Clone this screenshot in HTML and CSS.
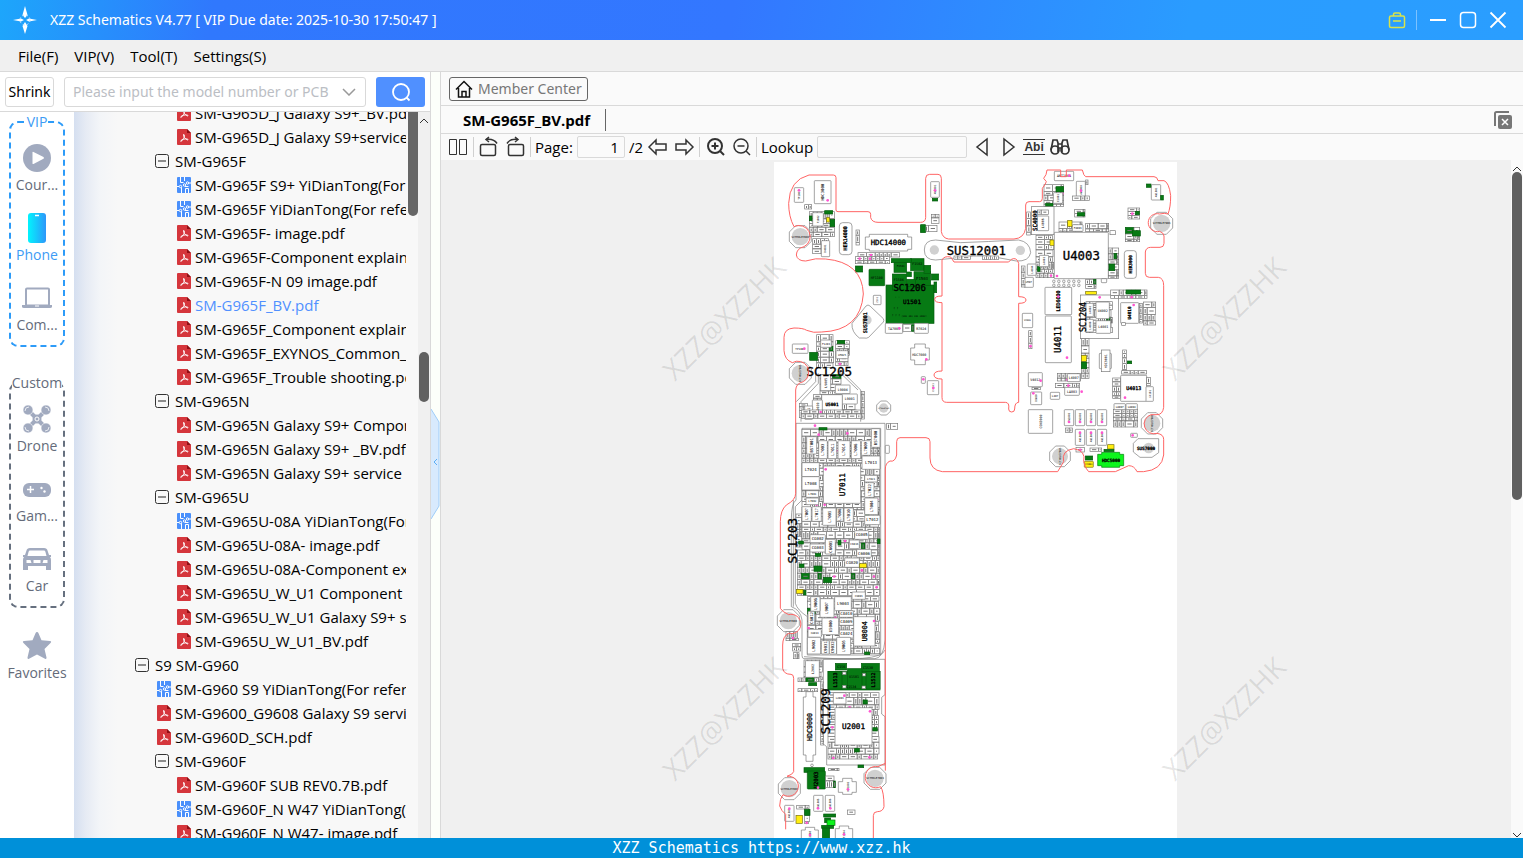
FILE: index.html
```
<!DOCTYPE html>
<html lang="en">
<head>
<meta charset="utf-8">
<title>XZZ Schematics</title>
<link rel="stylesheet" href="styles.css">
</head>
<body>

<svg class="defs" width="0" height="0">
	<symbol id="pdf" viewBox="0 0 14 16">
		<path d="M1 0h9l4 4v11q0 1-1 1H1q-1 0-1-1V1q0-1 1-1z" fill="#d5363c"/>
		<path d="M10 0l4 4h-4z" fill="#8e1015"/>
		<path d="M6.500 5.500c2 0 .5 3.500-1 5.500s-2.500 1.500-1.500.5 4-2 6-1.500 1 1.500-.5.500-3-3-3-5z" fill="none" stroke="#fff" stroke-width="1"/>
	</symbol>
	<symbol id="pcb" viewBox="0 0 14 16">
		<rect width="14" height="16" rx="1" fill="#4a90fb"/>
		<path d="M3.500 0v5.500h3M7.500 0v4M10.500 6h3.500M0 9.500h2M4.500 10v6M8.500 16v-4.500h3V16M11.500 9.500H8" fill="none" stroke="#fff" stroke-width="1"/>
		<circle cx="3.500" cy="9.500" r="1.200" fill="#4a90fb" stroke="#fff"/>
		<circle cx="7.500" cy="8" r="1.200" fill="#4a90fb" stroke="#fff"/>
		<circle cx="10.500" cy="6" r="1.200" fill="#4a90fb" stroke="#fff"/>
	</symbol>
	<symbol id="minus" viewBox="0 0 14 14">
		<rect x=".5" y=".5" width="13" height="13" rx="2" fill="#f8f8f8" stroke="#333"/>
		<path d="M3 7h8" stroke="#222"/>
	</symbol>
	<symbol id="up" viewBox="0 0 10 6">
		<path d="M1 5l4-4 4 4" fill="none" stroke="#333"/>
	</symbol>
</svg>

<header class="titlebar">
	<svg class="logo" viewBox="0 0 30 30" width="30" height="30">
		<path d="M15 1l2.500 9L15 13l-2.500-3zM15 29l2.500-8L15 17l-2.500 4zM3 15l8-1.500 3 1.500-3 1.500zM27 15l-8-1.500-3 1.500 3 1.500z" fill="#fff"/>
		<circle cx="15" cy="15" r="5" fill="none" stroke="#bfe2ff" stroke-dasharray="2 2"/>
	</svg>
	<h1>XZZ Schematics V4.77 [ VIP Due date: 2025-10-30 17:50:47 ]</h1>
	<button type="button" class="winbtn" aria-label="Toolbox">
		<svg viewBox="0 0 18 18" width="18" height="18" fill="none" stroke="#d9e34a" stroke-width="1.500"><rect x="1.500" y="5" width="15" height="11.500" rx="1.500"/><path d="M5.500 5V3.500q0-1.500 1.500-1.500h4q1.500 0 1.500 1.500V5M5 10h8"/></svg>
	</button>
	<span class="winsep"></span>
	<button type="button" class="winbtn" aria-label="Minimize">
		<svg viewBox="0 0 18 18" width="18" height="18" stroke="#fff" stroke-width="2"><path d="M1 9h16"/></svg>
	</button>
	<button type="button" class="winbtn" aria-label="Maximize">
		<svg viewBox="0 0 18 18" width="18" height="18" fill="none" stroke="#fff" stroke-width="1.500"><rect x="1.500" y="1.500" width="15" height="15" rx="3"/></svg>
	</button>
	<button type="button" class="winbtn" aria-label="Close">
		<svg viewBox="0 0 18 18" width="18" height="18" stroke="#fff" stroke-width="1.800"><path d="M1.500 1.500l15 15M16.500 1.500l-15 15"/></svg>
	</button>
</header>

<nav class="menubar">
	<button type="button">File(F)</button>
	<button type="button">VIP(V)</button>
	<button type="button">Tool(T)</button>
	<button type="button">Settings(S)</button>
</nav>

<main class="main">
	<section class="left">
		<form class="search">
			<button type="button" class="shrink">Shrink</button>
			<div class="combo">
				<input type="text" aria-label="Model number" placeholder="Please input the model number or PCB">
				<button type="button" aria-label="History"><svg viewBox="0 0 14 8" width="14" height="8"><path d="M1 1l6 6 6-6" fill="none" stroke="#999" stroke-width="1.500"/></svg></button>
			</div>
			<button type="button" class="go" aria-label="Search"><svg viewBox="0 0 22 22" width="22" height="22"><circle cx="11" cy="11" r="8" fill="none" stroke="#fff" stroke-width="1.800"/><path d="M16.500 16.500l3 3" stroke="#fff" stroke-width="1.800"/></svg></button>
		</form>

		<div class="browse">
			<aside class="rail">
				<fieldset class="group vip">
					<legend>VIP</legend>
					<button type="button"><svg viewBox="0 0 32 32"><circle cx="16" cy="16" r="14" fill="#a1aabf"/><path d="M11.500 10.500q0-1 1-.5l10 5q1 1 0 1.800l-10 5.200q-1 .4-1-.8z" fill="#fff"/></svg>Cour...</button>
					<button type="button" class="on"><svg viewBox="0 0 32 32"><linearGradient id="ph"><stop offset="0" stop-color="#02f4fd"/><stop offset="1" stop-color="#2d97fa"/></linearGradient><rect x="7" y="1" width="18" height="30" rx="3" fill="url(#ph)"/><path d="M14 3.500h4" stroke="#fff" stroke-width="1.500"/></svg>Phone</button>
					<button type="button"><svg viewBox="0 0 32 32"><rect x="5" y="6.500" width="23" height="17" rx="1" fill="none" stroke="#a1aabf" stroke-width="2"/><path d="M1 23h30v1.500q0 1.500-2 1.500H3q-2 0-2-1.500z" fill="#a1aabf"/><path d="M14 24h4" stroke="#fff"/></svg>Com...</button>
				</fieldset>
				<fieldset class="group custom">
					<legend>Custom</legend>
					<button type="button"><svg viewBox="0 0 32 32"><path d="M7 7l18 18M25 7L7 25" stroke="#a1aabf" stroke-width="4"/><g fill="#a1aabf" stroke="#fff" stroke-width=".6"><circle cx="7" cy="7" r="5"/><circle cx="25" cy="7" r="5"/><circle cx="7" cy="25" r="5"/><circle cx="25" cy="25" r="5"/></g><g fill="none" stroke="#e8ebf1"><path d="M4 8q0-4 4-4M24 4q4 0 4 4M4 24q0 4 4 4M24 28q4 0 4-4"/></g><circle cx="16" cy="16" r="4.500" fill="#a1aabf"/><circle cx="16" cy="16" r="2" fill="#a1aabf" stroke="#fff"/></svg>Drone</button>
					<button type="button"><svg viewBox="0 0 32 32"><rect x="2" y="10" width="28" height="14" rx="6" fill="#a1aabf"/><path d="M9.500 13v7M6 16.500h7" stroke="#fff" stroke-width="1.500"/><circle cx="20.500" cy="15" r="1.200" fill="#fff"/><circle cx="23.500" cy="18.500" r="1.200" fill="#fff"/></svg>Gam...</button>
					<button type="button"><svg viewBox="0 0 32 32"><path fill="#a1aabf" fill-rule="evenodd" d="M9 5h14q3 0 3.500 2.500L28 12h2v2h-1q1 1 1 3v10h-5v-4H7v4H2V17q0-2 1-3H2v-2h2l1.500-4.500Q6 5 9 5zm0 2.500q-1 0-1.400 1.200L6.500 13h19l-1.100-4.300Q24 7.500 23 7.500zM5.500 17v3h5l-1-3zm7 0v3h7v-3zm10 0l-1 3h5v-3z"/></svg>Car</button>
				</fieldset>
				<button type="button" class="fav"><svg viewBox="0 0 32 32"><path d="M16 2q1 0 1.500 1.200l3 7 8.500.8q2 .5.500 2l-6 6 2 8.500q.2 2-1.500 1.200L16 24.500l-8 4.200q-1.700.8-1.500-1.200l2-8.500-6-6q-1.500-1.500.5-2l8.500-.8 3-7Q15 2 16 2z" fill="#a1aabf"/></svg>Favorites</button>
			</aside>

			<div class="tree">
				<ul class="list">
					<li class="l3"><svg class="ico"><use href="#pdf"/></svg>SM-G965D_J Galaxy S9+_BV.pdf</li>
					<li class="l3"><svg class="ico"><use href="#pdf"/></svg>SM-G965D_J Galaxy S9+service</li>
					<li class="l2"><svg class="tog"><use href="#minus"/></svg>SM-G965F</li>
					<li class="l3"><svg class="ico"><use href="#pcb"/></svg>SM-G965F S9+ YiDianTong(For</li>
					<li class="l3"><svg class="ico"><use href="#pcb"/></svg>SM-G965F YiDianTong(For refer</li>
					<li class="l3"><svg class="ico"><use href="#pdf"/></svg>SM-G965F- image.pdf</li>
					<li class="l3"><svg class="ico"><use href="#pdf"/></svg>SM-G965F-Component explain.</li>
					<li class="l3"><svg class="ico"><use href="#pdf"/></svg>SM-G965F-N 09 image.pdf</li>
					<li class="l3 current"><svg class="ico"><use href="#pdf"/></svg>SM-G965F_BV.pdf</li>
					<li class="l3"><svg class="ico"><use href="#pdf"/></svg>SM-G965F_Component explain.</li>
					<li class="l3"><svg class="ico"><use href="#pdf"/></svg>SM-G965F_EXYNOS_Common_S</li>
					<li class="l3"><svg class="ico"><use href="#pdf"/></svg>SM-G965F_Trouble shooting.pd</li>
					<li class="l2"><svg class="tog"><use href="#minus"/></svg>SM-G965N</li>
					<li class="l3"><svg class="ico"><use href="#pdf"/></svg>SM-G965N Galaxy S9+ Compon</li>
					<li class="l3"><svg class="ico"><use href="#pdf"/></svg>SM-G965N Galaxy S9+ _BV.pdf</li>
					<li class="l3"><svg class="ico"><use href="#pdf"/></svg>SM-G965N Galaxy S9+ service m</li>
					<li class="l2"><svg class="tog"><use href="#minus"/></svg>SM-G965U</li>
					<li class="l3"><svg class="ico"><use href="#pcb"/></svg>SM-G965U-08A YiDianTong(For</li>
					<li class="l3"><svg class="ico"><use href="#pdf"/></svg>SM-G965U-08A- image.pdf</li>
					<li class="l3"><svg class="ico"><use href="#pdf"/></svg>SM-G965U-08A-Component exp</li>
					<li class="l3"><svg class="ico"><use href="#pdf"/></svg>SM-G965U_W_U1 Component e</li>
					<li class="l3"><svg class="ico"><use href="#pdf"/></svg>SM-G965U_W_U1 Galaxy S9+ se</li>
					<li class="l3"><svg class="ico"><use href="#pdf"/></svg>SM-G965U_W_U1_BV.pdf</li>
					<li class="l1"><svg class="tog"><use href="#minus"/></svg>S9 SM-G960</li>
					<li class="l2f"><svg class="ico"><use href="#pcb"/></svg>SM-G960 S9 YiDianTong(For refere</li>
					<li class="l2f"><svg class="ico"><use href="#pdf"/></svg>SM-G9600_G9608 Galaxy S9 service</li>
					<li class="l2f"><svg class="ico"><use href="#pdf"/></svg>SM-G960D_SCH.pdf</li>
					<li class="l2"><svg class="tog"><use href="#minus"/></svg>SM-G960F</li>
					<li class="l3"><svg class="ico"><use href="#pdf"/></svg>SM-G960F SUB REV0.7B.pdf</li>
					<li class="l3"><svg class="ico"><use href="#pcb"/></svg>SM-G960F_N W47 YiDianTong(F</li>
					<li class="l3"><svg class="ico"><use href="#pdf"/></svg>SM-G960F_N W47- image.pdf</li>
				</ul>
				<div class="innerthumb"></div>
			</div>

			<div class="scroll">
				<svg width="10" height="6"><use href="#up"/></svg>
				<div class="thumb"></div>
			</div>
		</div>
	</section>

	<div class="splitter">
		<button type="button" aria-label="Collapse"><svg viewBox="0 0 9 110" width="9" height="110"><path d="M0 0l8 13v84l-8 13z" fill="#d8eafd"/><path d="M0 0l8 13v84l-8 13" fill="none" stroke="#9fcdf8"/><path d="M6 50l-3 3 3 3" fill="none" stroke="#5caef5"/></svg></button>
	</div>

	<section class="right">
		<div class="member">
			<button type="button"><svg viewBox="0 0 18 18" width="18" height="18" fill="none" stroke="#111" stroke-width="1.500"><path d="M1 9.500L9 1.500l8 8M3.500 8v9h11V8M7 17v-5.500h4V17"/></svg>Member Center</button>
		</div>
		<div class="tabs">
			<a href="#board">SM-G965F_BV.pdf</a>
			<button type="button" aria-label="Close all"><svg viewBox="0 0 18 18" width="18" height="18"><path d="M1 15V2.500Q1 1 2.500 1H15" fill="none" stroke="#777" stroke-width="2"/><rect x="4" y="4" width="14" height="14" rx="2" fill="#777"/><path d="M8 8l6 6M14 8l-6 6" stroke="#fff" stroke-width="1.500"/></svg></button>
		</div>
		<div class="toolbar">
			<button type="button" aria-label="Two pages"><svg viewBox="0 0 22 22"><path d="M2.500 3.500h7v15h-7zM12.500 3.500h7v15h-7z"/></svg></button>
			<span class="sep"></span>
			<button type="button" aria-label="Rotate left"><svg viewBox="0 0 22 22" stroke-width="1.500"><rect x="2.500" y="8.500" width="15" height="11" rx="1.500"/><path d="M8 3.500q8-1 11 4M11 1L8 3.500 11 6"/></svg></button>
			<button type="button" aria-label="Rotate right"><svg viewBox="0 0 22 22" stroke-width="1.500"><rect x="4.500" y="8.500" width="15" height="11" rx="1.500"/><path d="M14 3.500q-8-1-11 4M11 1l3 2.500L11 6"/></svg></button>
			<span class="sep"></span>
			<label for="page">Page:</label>
			<input type="text" id="page" class="page" value="1">
			<span>/2</span>
			<button type="button" aria-label="Previous page"><svg viewBox="0 0 22 22" stroke-width="1.500"><path d="M2 11l7-7v4h10v6H9v4z"/></svg></button>
			<button type="button" aria-label="Next page"><svg viewBox="0 0 22 22" stroke-width="1.500"><path d="M20 11l-7-7v4H3v6h10v4z"/></svg></button>
			<span class="sep"></span>
			<button type="button" aria-label="Zoom in"><svg viewBox="0 0 22 22" stroke-width="2"><circle cx="11" cy="10" r="7"/><path d="M16 15l4 4M7.500 10h7M11 6.500v7"/></svg></button>
			<button type="button" aria-label="Zoom out"><svg viewBox="0 0 22 22" stroke-width="1.500"><circle cx="11" cy="10" r="7"/><path d="M16 15l4 4M7.500 10h7"/></svg></button>
			<span class="sep"></span>
			<label for="lookup">Lookup</label>
			<input type="text" id="lookup" class="lookup">
			<button type="button" aria-label="Find previous"><svg viewBox="0 0 22 22" stroke-width="1.500"><path d="M16 3v16L6 11z"/></svg></button>
			<button type="button" aria-label="Find next"><svg viewBox="0 0 22 22" stroke-width="1.500"><path d="M7 3v16l10-8z"/></svg></button>
			<button type="button" class="abi">Abi</button>
			<button type="button" aria-label="Search document"><svg viewBox="0 0 22 22" stroke-width="1.700"><circle cx="6" cy="14" r="4"/><circle cx="16" cy="14" r="4"/><path d="M2 14L4 4h4l1 3v9M20 14L18 4h-4l-1 3v9M9 8h4M9 12h4"/></svg></button>
		</div>

		<div class="viewer">
			<div class="sheet">
				<svg id="board" viewBox="0 6 1209 2028">
					<g class="edge">
						<path d="M60 200q-16-30-16-70 2-70 61-85h73q8 0 8 8v97q0 5 6 5h90q8 0 8 8v10q4 14 22 14h128q14 0 15-14V55q0-12 12-12h25q10 0 10 12v160q4 20 22 22h196q30-2 35-32v-70q0-10 10-10h32q8 0 8-10V85q8-10 12-20l-8-10q9-10 10-25h41v20h17V30h48q4 18 10 20h205q10 0 12 12h18q15 5 20 45 0 35-8 55-10-4-25 0a27 27 0 1 0 0 52q12 4 13 14v22q0 12-12 12h-28q-14 0-16 14v64q0 12 12 12h27q16 2 16 25v365q-3 22-20 22h-18a29 29 0 1 0 18 56q20 3 20 18v47q-5 45-60 50h-20q-8-18-25-18l-40 18h-80q-10-8-15-30 8-33-30-39-38 6-30 39l-18 30H505q-37-5-37-41v-49q0-12-12-12h-78q-10 0-10 12v40q-5 22-20 18-14 6-14 24v905"/>
						<path d="M334 1810q-12 5-22 10a32 32 0 1 0 8 60q10 15 10 60-3 15-20 15-12 0-12 12v70M60 200a29 29 0 0 1 30 60q-22 5-23 25 3 18 28 18 30-10 60-6 110 10 113 105-8 110-125 114-25 4-45-5-10-7-38-7-30 2-30 28v40q2 28 25 36a32 32 0 1 1 33 57q-22 5-23 25v310q0 20-28 35-18 16-18 50v260q5 10 25 19a29 29 0 1 1 0 56q-18 9-18 35v70q3 18 25 18 8 0 8 12v280q-2 8-20 14a30 30 0 1 1-12 55q-10 12-10 34 5 15 18 25v45"/>
						<path d="M504 300v108q-22 0-22 10t22 10v205q-24 0-24 12t24 12v55q0 15 14 15h176q13 0 10 20a9 9 0 0 0 18 0q0-20 12-20V430q22 0 22-10t-22-10V310q-6-20-22-12l-8 8H540l-10-15q-20-4-26 9z"/>
					</g>
				</svg>
				<script src="board.js"></script>
			</div>
			<div class="scroll">
				<svg width="10" height="6"><use href="#up"/></svg>
				<div class="thumb tall"></div>
				<svg class="down" width="10" height="6"><use href="#up"/></svg>
			</div>
			<div class="marks">
				<span>XZZ@XZZHK</span><span>XZZ@XZZHK</span>
				<span>XZZ@XZZHK</span><span>XZZ@XZZHK</span>
			</div>
		</div>
	</section>
</main>

<footer class="footer">XZZ Schematics https://www.xzz.hk</footer>

</body>
</html>
```

FILE: styles.css
```
* {
	box-sizing: border-box;
}

body {
	margin: 0;
	height: 100vh;
	display: flex;
	flex-direction: column;
	overflow: hidden;
	font: 15px/24px "Open Sans", "Noto Sans", sans-serif;
	color: #000;
}

button, input {
	font: inherit;
	color: inherit;
	margin: 0;
	padding: 0;
	border: 0;
	background: none;
}

.defs {
	position: absolute;
}

.titlebar {
	height: 40px;
	flex: none;
	display: flex;
	align-items: center;
	gap: 12px;
	padding: 0 16px 0 10px;
	background: linear-gradient(100deg, #1da6fb 0, #3078fd 14%, #3377ff 48%, #2a9cff 78%, #2a9eff 100%);
	color: #fff;
}

.titlebar h1 {
	flex: 1;
	margin: 0;
	font-family: "Noto Sans", sans-serif;
	font-size: 14px;
	font-weight: normal;
}

.logo {
	margin-right: -2px;
}

.winbtn {
	width: 18px;
	height: 18px;
}

.winbtn svg {
	display: block;
}

.winsep {
	width: 1px;
	height: 20px;
	margin-left: -2px;
	background: #7cc2ff;
}

.menubar {
	height: 32px;
	flex: none;
	display: flex;
	gap: 16px;
	padding: 1px 18px 0;
	background: #f0f0f0;
	border-bottom: 1px solid #d9d9d9;
}

.main {
	flex: 1;
	min-height: 0;
	display: flex;
}

.left {
	width: 431px;
	flex: none;
	display: flex;
	flex-direction: column;
	border-right: 1px solid #d9d9d9;
}

.search {
	height: 40px;
	flex: none;
	display: flex;
	align-items: center;
	gap: 10px;
	padding: 0 5px;
	border-bottom: 1px solid #d9d9d9;
	font-family: "Noto Sans", sans-serif;
	font-size: 14px;
}

.shrink {
	width: 49px;
	height: 30px;
	border: 1px solid #d9d9d9;
	border-radius: 3px;
}

.combo {
	flex: 1;
	height: 30px;
	display: flex;
	align-items: center;
	padding: 0 9px 0 8px;
	border: 1px solid #d9d9d9;
	border-radius: 3px;
}

.combo input {
	flex: 1;
	min-width: 0;
}

.combo input::placeholder {
	color: #bbbec4;
}

.combo button {
	display: flex;
}

.go {
	width: 49px;
	height: 30px;
	display: flex;
	align-items: center;
	justify-content: center;
	border-radius: 3px;
	background: #5090ff;
}

.browse {
	flex: 1;
	min-height: 0;
	display: flex;
}

.rail {
	width: 74px;
	flex: none;
	overflow: hidden;
	background: #fff;
	color: #646b7a;
	font-size: 14px;
}

.group {
	min-width: 0;
	margin: 0 9px 26px;
	padding: 10px 0 3px;
	border: 2px dashed #2d9bf8;
	border-radius: 9px;
}

.group legend {
	margin: 0 auto;
	padding: 0;
	line-height: 20px;
}

.vip legend, .rail .on {
	color: #3d9bf5;
}

.custom {
	margin-bottom: 22px;
	border-color: #66707f;
}

.rail button {
	width: 100%;
	height: 60px;
	display: flex;
	flex-direction: column;
	align-items: center;
	line-height: 22px;
}

.rail button + button {
	margin-top: 10px;
}

.rail svg {
	width: 32px;
	height: 32px;
	flex: none;
}

.tree {
	flex: 1;
	min-width: 0;
	display: flex;
	overflow: hidden;
	background: linear-gradient(90deg, #d5dff0 0, #e6ebf4 12px, #f3f5f8 26px, #f8f8f8 44px);
}

.list {
	flex: 1;
	min-width: 0;
	margin: -11px 2px 0 0;
	padding: 0;
	list-style: none;
	overflow: hidden;
}

.list li {
	height: 24px;
	display: flex;
	align-items: center;
	white-space: nowrap;
}

.list .current {
	color: #5090ff;
}

.ico {
	width: 14px;
	height: 16px;
	flex: none;
	margin-right: 4px;
}

.tog {
	width: 14px;
	height: 14px;
	flex: none;
	margin-right: 6px;
}

.l1 {
	padding-left: 61px;
}

.l2 {
	padding-left: 81px;
}

.l2f {
	padding-left: 83px;
}

.l3 {
	padding-left: 103px;
}

.innerthumb {
	width: 10px;
	height: 104px;
	border-radius: 0 0 5px 5px;
	background: #666;
}

.scroll {
	width: 12px;
	flex: none;
	display: flex;
	flex-direction: column;
	align-items: center;
	padding-top: 6px;
	background: #f0f0f0;
}

.scroll svg {
	flex: none;
}

.thumb {
	width: 10px;
	height: 50px;
	margin-top: 228px;
	border-radius: 5px;
	background: #606060;
}

.splitter {
	width: 10px;
	flex: none;
	display: flex;
	align-items: center;
	border-right: 1px solid #d9d9d9;
	background: #fcfffa;
}

.splitter button {
	display: flex;
	margin-top: 18px;
}

.right {
	flex: 1;
	min-width: 0;
	display: flex;
	flex-direction: column;
	background: #fafafa;
}

.member {
	height: 34px;
	flex: none;
	display: flex;
	align-items: center;
	padding: 0 8px;
	border-bottom: 1px solid #d9d9d9;
}

.member button {
	height: 24px;
	display: flex;
	align-items: center;
	gap: 5px;
	padding: 0 5px;
	border: 1px solid #666;
	border-radius: 3px;
	color: #777;
	font-family: "Noto Sans", sans-serif;
	font-size: 14px;
}

.tabs {
	height: 28px;
	flex: none;
	display: flex;
	align-items: center;
	justify-content: space-between;
	padding: 0 11px 0 0;
	border-bottom: 1px solid #d9d9d9;
}

.tabs a {
	padding: 0 15px 0 22px;
	border-right: 1px solid #666;
	color: #000;
	font-weight: bold;
	line-height: 22px;
	text-decoration: none;
}

.tabs button, .toolbar button {
	display: flex;
}

.toolbar {
	height: 26px;
	flex: none;
	display: flex;
	align-items: center;
	gap: 4px;
	padding: 0 6px;
}

.toolbar svg {
	width: 22px;
	height: 22px;
	fill: none;
	stroke: #333;
}

.toolbar input {
	height: 22px;
	border: 1px solid #d9d9d9;
	border-radius: 2px;
}

.toolbar .page {
	width: 48px;
	padding-right: 5px;
	text-align: right;
}

.toolbar .lookup {
	width: 150px;
}

.sep {
	width: 1px;
	height: 20px;
	background: #d0d0d0;
}

.toolbar .abi {
	width: 22px;
	justify-content: center;
	border: solid #333;
	border-width: 1px 0;
	color: #333;
	font: bold 12px/14px "Liberation Sans", sans-serif;
}

.viewer {
	flex: 1;
	min-height: 0;
	display: flex;
	position: relative;
	overflow: hidden;
	background: #f0f0f0;
}

.sheet {
	flex: 1;
	min-width: 0;
	padding: 2px 1px 0 0;
	text-align: center;
}

#board {
	width: 403px;
	background: #fff;
	font-family: "DejaVu Sans Mono", monospace;
}

.big {
	stroke: #000;
	stroke-width: 1;
}

.viewer .scroll {
	background: #fafafa;
}

.tall {
	height: 328px;
	margin-top: 0;
}

.down {
	margin-top: auto;
	transform: rotate(180deg);
}

.marks {
	position: absolute;
	left: 203px;
	top: 62px;
	display: grid;
	grid-template-columns: 500px 500px;
	grid-auto-rows: 400px;
	pointer-events: none;
}

.marks span {
	justify-self: start;
	align-self: start;
	margin-top: 84px;
	transform: rotate(-45deg);
	color: rgba(0, 0, 0, .1);
	font-size: 28px;
}

.edge path {
	fill: none;
	stroke: #ff6464;
	stroke-width: 3;
}

.part {
	fill: #fff;
	stroke: #777;
	stroke-width: 2;
}

.part.g {
	fill: #077a14;
	stroke: #045c0c;
}

.part.l {
	fill: #0cf51c;
	stroke: #067a10;
}

.part.y {
	fill: #ffee10;
	stroke: #776f10;
}

.part.none {
	fill: none;
}

.tick {
	fill: #777;
}

.hole {
	fill: #d0d0d0;
	stroke: none;
}

.pin {
	fill: #ff55d0;
}

.footer {
	height: 20px;
	flex: none;
	background: #0090d9;
	color: #fff;
	font: 15px/20px "DejaVu Sans Mono", monospace;
	text-align: center;
}
```

FILE: board.js
```
var board = document.getElementById("board");
var out = "";
var seed = 7;

function rnd() {
	seed = (seed * 16807) % 2147483647;
	return seed / 2147483647;
}

// x, y is the centre of the text; adv is the advance of one character
function label(x, y, text, adv, vert) {
	out += '<text' + (adv >= 8 ? ' class="big"' : '') + ' text-anchor="middle" font-size="' + Math.round(adv / 0.6) + '" transform="translate(' + x + ' ' + y + ')' + (vert ? ' rotate(-90)' : '') + '" dy=".35em">' + text + '</text>';
}

function box(x, y, w, h, cls, rx) {
	out += '<rect class="part ' + (cls || "") + '" x="' + x + '" y="' + y + '" width="' + w + '" height="' + h + '" rx="' + (rx || 0) + '"/>';
}

function chip(x, y, w, h, text, adv, vert, cls) {
	box(x, y, w, h, cls, 2);
	if (text)
		label(x + w / 2, y + h / 2, text, adv || 7, vert);
}

function pin(x, y) {
	out += '<circle class="pin" cx="' + x + '" cy="' + y + '" r="4"/>';
}

// small passives packed into rows
function cluster(x, y, w, h) {
	var cy = y;
	while (cy < y + h - 6) {
		var rh = Math.min(y + h - cy, 11 + Math.floor(rnd() * 12));
		var cx = x;
		while (cx < x + w - 5) {
			var cw = Math.min(x + w - cx, rnd() > 0.5 ? 12 : 26);
			var r = rnd();
			box(cx, cy, cw - 1, rh - 1, r > 0.98 ? "g" : "");
			if (cw > 14)
				out += '<rect class="tick" x="' + (cx + 6) + '" y="' + (cy + rh / 2 - 2) + '" width="' + (cw - 13) + '" height="3"/>';
			else if (rh > 9)
				out += '<rect class="tick" x="' + (cx + cw / 2 - 2) + '" y="' + (cy + 4) + '" width="3" height="' + (rh - 8) + '"/>';
			if (r < 0.03)
				pin(cx + cw / 2, cy + rh / 2);
			cx += cw;
		}
		cy += rh;
	}
}

function screw(x, y, r, vert) {
	var k = Math.round(r * 0.42);
	out += '<path class="part" d="M' + (x - k) + ' ' + (y - r) + 'h' + 2 * k + 'L' + (x + r) + ' ' + (y - k) + 'v' + 2 * k + 'L' + (x + k) + ' ' + (y + r) + 'h' + -2 * k + 'L' + (x - r) + ' ' + (y + k) + 'v' + -2 * k + 'z"/>';
	out += '<circle class="hole" cx="' + x + '" cy="' + y + '" r="' + (r - 7) + '"/>';
	label(x, y, "SCTHOLE7003", r > 25 ? 5 : 3, vert);
}

function open(dx, dy) {
	out += '<g transform="translate(' + dx + ' ' + dy + ')">';
}

function close() {
	out += "</g>";
}

// ---- top left ----
open(0, 0);
screw(79, 230, 33);
screw(79, 640, 33, 1);
screw(329, 744, 21);
chip(61, 83, 28, 44, "TP1003", 5, 1); pin(75, 91);
chip(121, 62, 50, 69, "HDC3000", 7, 1); pin(161, 121);
chip(470, 65, 26, 47, "AN1001", 5, 1); pin(483, 91);
cluster(472, 163, 24, 30);
cluster(440, 196, 55, 24);
box(475, 115, 16, 8, "g"); box(440, 194, 14, 24, "g");
cluster(92, 134, 22, 14);
cluster(106, 155, 76, 80);
chip(116, 158, 32, 40, "F1002", 5, 1);
box(152, 152, 24, 10, "g"); box(168, 178, 14, 22, "g"); box(106, 168, 8, 14, "g"); box(158, 172, 8, 14, "y");
cluster(116, 236, 52, 52);
chip(142, 242, 25, 48, "D4001", 5, 1);
box(196, 188, 38, 96, "", 10); label(214, 235, "HER14000", 9, 1);
cluster(246, 210, 11, 46);
out += '<path class="part" d="M286 223h115v8h12v37h-12v5H286v-5h-12v-37h12z"/>';
label(343, 248, "HDC14000", 13);
cluster(252, 278, 128, 14);
cluster(244, 290, 104, 22);
box(244, 318, 22, 18, "g");
chip(285, 328, 47, 49, "HF1100", 6, 0, "g");
box(336, 375, 144, 115, "g"); box(355, 342, 42, 48, "g"); box(410, 296, 40, 36, "g"); box(420, 335, 50, 42, "g"); box(360, 305, 38, 32, "g"); box(352, 296, 60, 12, "g"); box(472, 342, 22, 18, "g"); box(480, 366, 8, 32, "g"); box(450, 316, 20, 24, "g"); box(398, 336, 14, 14, "g"); box(398, 358, 26, 22, "g");
label(430, 312, "F1502", 6); label(444, 355, "F1503", 7); label(374, 360, "F1504", 6); label(380, 318, "F1501", 5);
label(407, 384, "SC1206", 16);
label(414, 427, "U1501", 11);
label(420, 470, "[101 101 101 1001]", 4);
label(366, 466, "[ [ [", 5); label(366, 443, "[ [", 5); label(370, 412, ": :", 5);
chip(298, 406, 23, 28, "Z101", 4, 1);
out += '<path class="part" d="M276 438q6-6 12 0l40 38q3 6 0 10l-44 46q-6 4-14 2h-14q-24-18-22-44z"/><circle class="hole" cx="279" cy="480" r="14"/>';
label(275, 488, "SUS7001", 9, 1);
chip(334, 490, 52, 30, "TA7003", 6); cluster(387, 494, 34, 24); chip(421, 490, 42, 30, "R7024", 6);
pin(376, 505);
chip(55, 552, 47, 28, "TP1005", 5); pin(91, 566);
cluster(128, 524, 52, 100);
cluster(185, 542, 42, 76);
chip(140, 540, 32, 22, "F1203", 5); chip(186, 572, 36, 24, "LM025", 5);
box(107, 577, 24, 24, "g"); box(190, 541, 22, 10, "g");
out += '<path class="part" d="M422 552h32v12h12v36h-12v14h-32v-14h-12v-36h12z"/>';
label(436, 584, "HDC7000", 6); pin(457, 598);
chip(442, 650, 12, 20); chip(460, 662, 34, 42, "CON101", 4, 1); pin(448, 658); pin(478, 684);
out += '<path class="part none" d="M125 640v25l-58 60M133 640v30l-52 55v60M200 630l60 60v95M192 632l60 58"/>';
cluster(138, 644, 64, 60); cluster(118, 704, 130, 60);
cluster(76, 730, 25, 48);
cluster(262, 694, 10, 84);
chip(140, 644, 30, 48, "L9005", 6, 1);
chip(184, 675, 44, 26, "L9004", 6); chip(204, 702, 46, 30, "L9001", 6);
chip(143, 704, 62, 58, "U5001", 8); pin(199, 757);
chip(115, 720, 30, 45, "L9020", 6, 1); chip(92, 738, 24, 40, "L9001", 6, 1);
label(166, 636, "SC1205", 23);
close();

// ---- top right ----
open(600, 0);
screw(563, 190, 33);
screw(534, 790, 32, 1);
screw(258, 889, 31, 1);
out += '<path class="part" d="M-115 240q-34 0-34 30t34 30l60-6Q0 285 45 288l82 15q38 2 43-25-2-32-36-38Q40 245-40 248z"/>';
out += '<circle class="hole" cx="-119" cy="270" r="14"/><circle class="hole" cx="139" cy="271" r="14"/>';
label(7, 271, "SUS12001", 22);
cluster(-60, 288, 52, 12); cluster(26, 288, 50, 12);
chip(241, 34, 58, 28, "ANT100A", 6); pin(286, 47);
chip(307, 64, 27, 52, "AN1000", 5, 1); pin(321, 92); cluster(295, 108, 52, 14); cluster(335, 60, 8, 15);
chip(532, 74, 28, 46, "AN1001", 5, 1); box(517, 72, 14, 10, "g"); box(560, 106, 8, 14, "g");
cluster(210, 74, 60, 66); box(246, 80, 23, 16, "g"); box(215, 130, 22, 10, "g"); chip(238, 98, 28, 32, "E1001", 5, 1);
cluster(302, 148, 32, 24); box(310, 158, 22, 10, "g");
cluster(462, 144, 36, 34); box(484, 154, 12, 10, "g");
cluster(454, 202, 44, 44); box(475, 212, 24, 16, "g");
box(172, 140, 68, 84); cluster(190, 150, 34, 14); chip(190, 168, 34, 44, "L4006", 6, 1);
cluster(158, 156, 14, 70);
label(183, 182, "SC4000", 10, 1);
cluster(255, 186, 70, 30); chip(295, 194, 32, 20, "F4003", 5); box(281, 181, 13, 18, "y");
cluster(335, 190, 70, 26); box(408, 212, 16, 12);
cluster(186, 226, 54, 128); box(228, 240, 12, 16, "y"); box(190, 320, 8, 14, "g");
chip(196, 286, 28, 34, "L4003", 5, 1); chip(160, 312, 26, 34, "L4004", 5, 1); chip(150, 352, 28, 30, "LM07", 5);
cluster(142, 318, 12, 64);
chip(241, 217, 162, 139, "U4003", 22); pin(249, 348);
cluster(403, 264, 32, 92); box(405, 312, 17, 20, "g"); box(420, 280, 8, 16, "g");
box(451, 272, 36, 83, "", 8); label(469, 313, "HER3000", 8, 1);
for (var i = 0; i < 6; i++) {
	box(236 + i * 15, 360, 7, 8, "", 3);
	box(236 + i * 15, 372, 7, 8, "", 3);
}
cluster(335, 358, 32, 28); chip(382, 356, 16, 12); box(335, 394, 32, 9, "y");
chip(213, 382, 80, 82, "LED6000", 9, 1); pin(253, 410);
chip(214, 468, 78, 140, "U4011", 16, 1); pin(279, 593);
box(319, 405, 115, 131); pin(377, 412);
cluster(336, 425, 80, 96);
chip(366, 426, 40, 50, "U4002", 6); chip(366, 482, 44, 38, "L4001", 6); chip(336, 430, 22, 40, "L4002", 5, 1); chip(336, 478, 22, 38, "L4000", 5, 1);
label(328, 471, "SC1204", 15, 1);
cluster(410, 390, 110, 26); box(456, 390, 44, 12, "g");
chip(440, 428, 54, 62, "U4010", 8, 1); pin(479, 435); cluster(496, 430, 10, 60);
cluster(508, 426, 38, 70); cluster(443, 488, 14, 9);
chip(145, 460, 31, 43, "VC001", 4); cluster(164, 512, 11, 60);
cluster(322, 536, 24, 120); box(322, 586, 15, 18, "y"); box(322, 606, 16, 20, "g");
box(376, 580, 36, 46, "", 2); box(382, 570, 26, 65); label(394, 604, "HDC9001", 6, 1);
cluster(446, 570, 12, 70); box(460, 603, 13, 8, "g"); cluster(443, 632, 80, 14);
chip(440, 646, 78, 78, "U4013", 9); pin(453, 713); chip(516, 680, 22, 44, "C4101", 5, 1); cluster(518, 652, 12, 26); cluster(416, 654, 24, 62);
chip(163, 638, 42, 42, "V4012", 6); pin(200, 662); chip(170, 696, 33, 38, "CON20", 5, 1); pin(178, 700); cluster(174, 682, 30, 8);
cluster(250, 640, 70, 24); chip(280, 641, 38, 24, "L4007", 6); cluster(244, 670, 74, 14); chip(272, 682, 44, 24, "LA003", 6); chip(229, 697, 28, 21, "L407", 5); pin(323, 695);
chip(163, 749, 73, 71, "CON2000", 6, 1);
for (i = 0; i < 4; i++) {
	chip(271 + i * 33, 749, 28, 48, "AN1003", 5, 1);
	pin(285 + i * 33, 786);
	if (i) {
		chip(271 + i * 33, 808, 28, 48, "AN1004", 5, 1);
		pin(285 + i * 33, 818);
	}
}
cluster(274, 804, 22, 14); cluster(306, 862, 28, 16); cluster(348, 864, 36, 14);
cluster(418, 748, 74, 56); chip(420, 731, 34, 18, "LA007", 5); chip(456, 731, 34, 18, "LA004", 5);
out += '<path class="part" d="M492 836h62v42l-20 14h-36l-20-16v-26z"/><circle class="hole" cx="524" cy="864" r="16"/>';
label(516, 864, "SUS7000", 8); chip(470, 820, 20, 12); pin(476, 826);
out += '<path class="part l" d="M383 877h54v6h12v34h-12v5h-54v-5h-12v-34h12z"/>';
label(411, 900, "HDC5000", 8);
box(401, 854, 19, 13, "y"); box(390, 868, 30, 7, "g"); box(334, 888, 22, 12, "g"); chip(331, 904, 27, 18, "C4001", 4, 0, "y");
close();

// ---- middle ----
open(0, 750);
screw(43, 632, 33);
out += '<path class="part none" d="M66 40H333V690q-4 54-30 56H90q-6 0-6-10V630q-4-30-32-40V330q0-50 14-60zM84 55H320v680H100V620q-30-20-36-40V290l20-20zM58 270v320"/>';
cluster(82, 0, 180, 26);
cluster(338, 40, 34, 24); chip(334, 106, 12, 24);
cluster(84, 58, 234, 104);
cluster(84, 160, 234, 140);
cluster(84, 300, 234, 120);
cluster(66, 312, 18, 100);
cluster(70, 420, 248, 140);
cluster(100, 560, 218, 172);
cluster(56, 700, 25, 24); cluster(58, 728, 18, 24);
cluster(36, 665, 38, 28); pin(57, 684);
var parts = [
	[98, 80, 30, 52, "BS7001", 1], [134, 92, 26, 54, "L7003", 1], [162, 92, 26, 54, "L7011", 1], [192, 92, 36, 54, "L7014", 1], [232, 92, 28, 54, "L7006", 1], [262, 92, 28, 44, "L7009", 1], [292, 56, 26, 56, "BS7000", 1],
	[264, 138, 54, 40, "L7013"], [84, 158, 52, 42, "L7024"], [84, 200, 52, 40, "L7008"], [96, 242, 38, 20, "L7001"], [96, 264, 38, 20, "L7002"],
	[272, 196, 38, 20, "L7021"], [272, 218, 28, 44, "L7022", 1], [272, 264, 40, 50, "L7004", 1], [272, 316, 46, 28, "L7012"],
	[84, 290, 28, 44, "L7007", 1], [114, 290, 28, 44, "L7017", 1], [146, 294, 40, 52, "L7005", 1], [188, 294, 20, 40, "L7006", 1], [210, 294, 28, 44, "L7010", 1],
	[108, 374, 46, 24, "CG002"], [108, 402, 46, 24, "CG003"], [154, 388, 30, 44, "C6005", 1], [242, 362, 42, 26, "CG005"], [248, 418, 44, 24, "C6006"], [212, 444, 44, 28, "CG020"], [226, 390, 30, 26, "C6016"],
	[138, 566, 42, 56, "L9007", 1], [182, 560, 50, 42, "L9003"], [234, 546, 40, 22, "C9003"], [196, 602, 42, 20, "CA010"], [196, 624, 42, 22, "CA009"], [196, 660, 42, 24, "CA024"],
	[144, 624, 50, 50, "U5000", 1], [102, 658, 40, 24, "C8019"], [100, 682, 40, 50, "L9002", 1], [142, 692, 24, 40, "C9031", 1], [166, 692, 22, 40, "C9032", 1], [188, 682, 42, 52, "L9005", 1], [110, 560, 28, 44, "L9006", 1], [102, 604, 20, 40, "C8012", 1]
];
parts.forEach(function (p) {
	chip(p[0], p[1], p[2], p[3], p[4], p[3] > 38 || p[2] > 40 ? 7 : 5, p[5]);
});
chip(148, 168, 112, 112, "U7011", 14, 1); pin(155, 178);
chip(239, 620, 64, 88, "U8004", 12, 1); pin(300, 633);
box(135, 53, 24, 7, "g"); box(192, 391, 9, 14, "g"); box(310, 387, 8, 14, "g"); box(120, 468, 24, 16, "g"); box(148, 502, 25, 16, "g"); box(124, 430, 16, 9, "g"); box(76, 462, 14, 10, "g"); box(74, 393, 14, 9, "g"); box(272, 726, 15, 8, "g"); box(88, 541, 8, 14, "g");
box(257, 461, 20, 12, "y"); box(67, 538, 20, 12, "y");
pin(123, 47); pin(220, 70); pin(134, 74); pin(104, 654);
label(57, 392, "SC1203", 23, 1);
close();

// ---- bottom ----
open(0, 1470);
screw(46, 416, 33);
screw(303, 385, 33);
out += '<path class="part none" d="M148 28h185v106l-10 8v50l10 8v145H158v-55l-10-8zM90 20q230 20 243-20"/>';
cluster(90, 30, 56, 60); chip(94, 32, 42, 50, "L2002", 6, 1); cluster(72, 84, 70, 12); box(104, 98, 24, 9, "g"); cluster(72, 116, 60, 10);
box(162, 64, 156, 56, "g"); box(184, 40, 34, 20, "g"); box(262, 40, 54, 24, "g"); box(220, 56, 44, 60, "g"); box(162, 64, 42, 53, "g"); box(276, 64, 42, 53, "g");
label(184, 90, "L1513", 9, 1); label(297, 90, "L1512", 9, 1); label(240, 80, "U1501", 6); label(232, 110, "C1534", 6); label(282, 52, "C1530", 6); label(202, 50, "C156", 6);
box(206, 66, 10, 8); box(206, 106, 10, 8); box(266, 70, 8, 8); box(264, 108, 10, 8);
cluster(162, 128, 154, 200);
chip(178, 128, 38, 34, "L2003", 5); box(267, 150, 13, 12, "g"); box(296, 233, 14, 10, "g"); box(242, 295, 14, 11, "g");
chip(183, 173, 111, 112, "U2001", 14); pin(288, 184); pin(211, 137); pin(178, 324); pin(286, 322);
cluster(140, 96, 10, 190);
out += '<path class="part" d="M96 125h21v16h8v174h-8v19H96v-19h-8V141h8z"/>';
label(107, 231, "HDC9000", 12, 1);
label(156, 184, "SC1209", 23, 1);
box(252, 345, 17, 8, "g");
box(110, 342, 8, 8, "", 4); cluster(164, 355, 32, 8);
box(90, 353, 62, 14, "g"); chip(100, 363, 54, 54, "U2003", 10, 1, "g"); pin(132, 413);
cluster(155, 378, 30, 40);
out += '<path class="part" d="M206 385h28v10h13v32h-13v6h-28v-6h-13v-32h13z"/>';
label(222, 410, "HF1003", 5, 1); pin(222, 418);
chip(119, 436, 28, 48, "AN1005", 5, 1); chip(154, 436, 28, 48, "AN1006", 5, 1); pin(132, 475); pin(169, 475);
chip(32, 466, 28, 48, "AN1007", 5, 1); pin(46, 476);
cluster(68, 466, 40, 18); box(66, 496, 19, 24, "y"); cluster(92, 476, 16, 46); box(92, 478, 16, 18, "g"); cluster(220, 480, 24, 14);
box(149, 492, 36, 9, "g"); box(152, 504, 18, 14, "g"); box(159, 510, 24, 16, "l"); box(143, 526, 36, 9, "g"); box(145, 534, 22, 40, "g");
out += '<path class="part" d="M94 532h28v8h11v36H82v-36h12zM196 528h28v8h12v38h-52v-38h12z"/>';
label(108, 555, "C2208", 5, 1); label(210, 555, "HF1004", 5, 1); pin(108, 555); pin(210, 553);
close();

board.innerHTML = out + board.innerHTML;
```
